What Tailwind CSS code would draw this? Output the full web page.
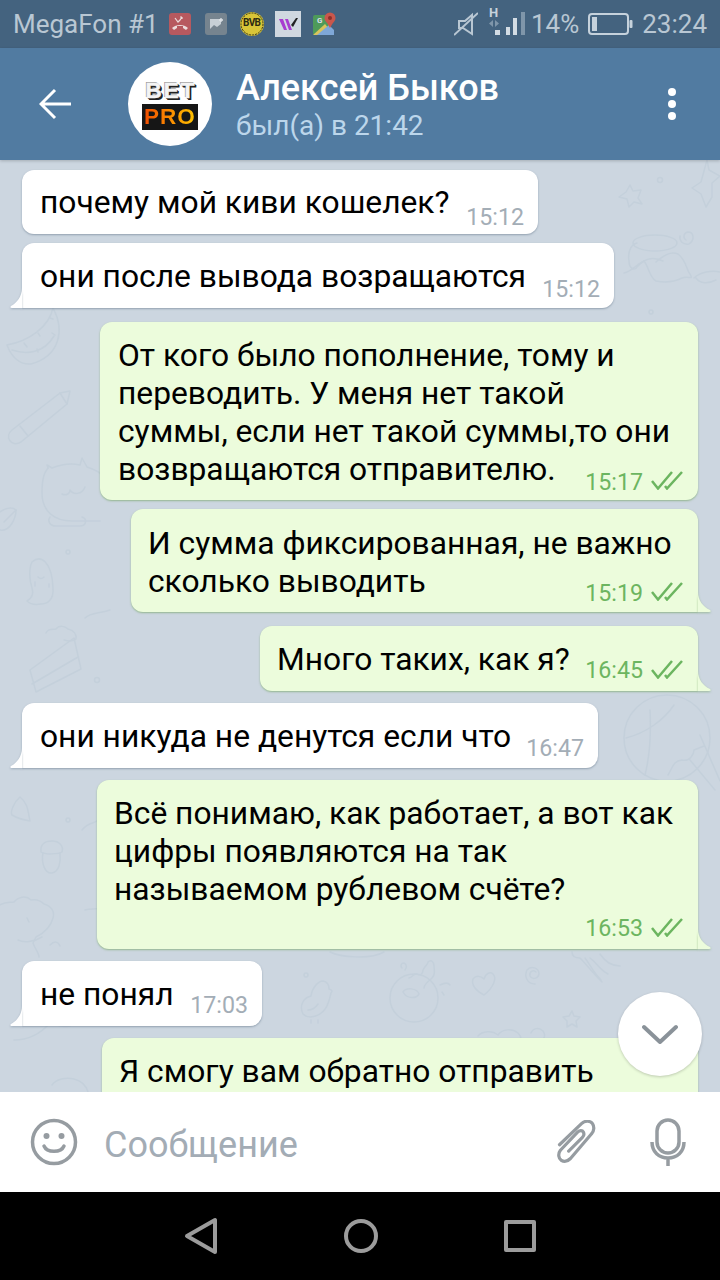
<!DOCTYPE html>
<html lang="ru">
<head>
    <meta charset="UTF-8">
    <meta name="viewport" content="width=device-width, initial-scale=1.0">
    <title>Алексей Быков</title>
    <script src="https://cdn.jsdelivr.net/npm/@tailwindcss/browser@4"></script>
</head>
<body class="bg-black">
<div class="w-[720px] h-[1280px] flex flex-col overflow-hidden font-['Roboto',sans-serif] text-black">

    <!-- status bar -->
    <div class="h-12 shrink-0 bg-[#44637f] flex items-center text-[#b9c7d3] text-[26px] pl-[13px] pr-[13px]">
        <span class="w-[156px]">MegaFon #1</span>
        <div class="flex items-center">
            <svg class="w-[22px] h-[22px]" viewBox="0 0 22 22"><rect width="22" height="22" rx="3" fill="#b7595f"/><path d="M3 15c4-4 12-4 16 0l-2 2-3-2v-2H8v2l-3 2z" fill="#ecdcdc"/><path d="M6 5l3 4 2-2 2-3M13 4h-2M13 4v2" stroke="#ecdcdc" stroke-width="1.2" fill="none"/></svg>
            <svg class="w-[22px] h-[22px] ml-[14px]" viewBox="0 0 22 22"><rect width="22" height="22" rx="3" fill="#76848f"/><rect x="5" y="6" width="11" height="10" fill="#c8d0d6"/><path d="M5 16l4-4 3 2 4-3v5z" fill="#76848f"/><path d="M14 7h4M16 5v4" stroke="#dfe4e8" stroke-width="1.3"/></svg>
            <svg class="w-6 h-6 ml-[13px]" viewBox="0 0 24 24"><circle cx="12" cy="12" r="12" fill="#d8c538"/><circle cx="12" cy="12" r="11" fill="none" stroke="#33321a" stroke-width="1" stroke-dasharray="2 1"/><text x="12" y="14" text-anchor="middle" font-size="10" font-weight="700" font-family="Roboto" fill="#2b2a12" textLength="18">BVB</text></svg>
            <div class="w-[26px] h-[26px] ml-[11px] bg-[#d0d8e0] flex items-center justify-center">
                <svg class="w-5 h-4" viewBox="0 0 20 16"><path d="M1 3h4l4 11H6zM7 3h3l4 11h-3z" fill="#a83cd0"/><path d="M13 9l5-7h2l-5 9z" fill="#222"/></svg>
            </div>
            <svg class="w-6 h-6 ml-[11px]" viewBox="0 0 24 24"><path d="M1 5a2 2 0 0 1 2-2h14v20H3a2 2 0 0 1-2-2z" fill="#4e9a5a"/><path d="M1 23l12-11 9 11z" fill="#d9c45c"/><path d="M5 23l12-10 5 5v5z" fill="#7fa8d8"/><circle cx="18" cy="6" r="5.5" fill="#c9574c"/><path d="M14 9l4 7 4-7z" fill="#c9574c"/><circle cx="18" cy="6" r="2" fill="#8d3029"/><text x="5" y="11" font-size="8" font-weight="700" font-family="Roboto" fill="#dde">G</text></svg>
        </div>
        <div class="ml-auto flex items-center">
            <svg class="w-6 h-6" viewBox="0 0 24 24" fill="none" stroke="#b9c7d3" stroke-width="2"><path d="M0 23L24 1"/><path d="M18 3v19L9 16H5V9h6z"/></svg>
            <div class="relative w-[38px] h-[26px] ml-[10px]">
                <span class="absolute left-[1px] top-[-5px] text-[13px] leading-[14px] font-bold text-[#c6d2dc]">H</span>
                <svg class="absolute left-0 top-0 w-[38px] h-[26px]" viewBox="0 0 38 26"><path d="M5 9l-4 3.500 4 3.500zM7 9l4 3.500-4 3.500z" fill="#7f96aa"/><rect x="7" y="19" width="5" height="5" fill="#d3dce4"/><rect x="18" y="16" width="4" height="8" fill="#d3dce4"/><rect x="25" y="7" width="4" height="17" fill="#d3dce4"/><rect x="33" y="1" width="4" height="23" fill="#7f96aa"/></svg>
            </div>
            <span class="ml-[5px]">14%</span>
            <svg class="w-[45px] h-[22px] ml-[9px]" viewBox="0 0 45 22" fill="none"><rect x="1" y="1" width="39" height="20" rx="3" stroke="#c6d2dc" stroke-width="2"/><rect x="4" y="4" width="5" height="14" fill="#c6d2dc"/><rect x="41.5" y="7" width="3" height="8" rx="1" fill="#c6d2dc"/></svg>
            <span class="ml-[9px]">23:24</span>
        </div>
    </div>

    <!-- header -->
    <div class="h-[112px] shrink-0 bg-[#517ba1] flex items-center relative z-10 shadow-[0_1px_3px_rgba(0,0,0,0.2)]">
        <svg class="w-8 h-8 ml-[39px]" viewBox="0 0 32 32" fill="none" stroke="#fff" stroke-width="3"><path d="M32 16H2M16 2L2 16l14 14"/></svg>
        <div class="w-[84px] h-[84px] ml-[57px] rounded-full bg-white flex items-center justify-center font-['Liberation_Sans',sans-serif] font-bold shrink-0">
            <div class="flex flex-col items-center">
                <span class="block h-[26px] text-[22.5px] leading-[26px] tracking-[2px] pl-[2px] text-[#f4f4f4] [-webkit-text-stroke:0.5px_#f4f4f4] [text-shadow:1px_1px_0_#222,2px_2px_0_#222,-1px_-1px_0_#999]">BET</span>
                <div class="bg-[#161616] px-[2px] h-[26px]">
                    <span class="block text-[22.5px] leading-[26px] tracking-[1px] bg-linear-to-r from-[#f04a00] to-[#ffc400] bg-clip-text text-transparent">PRO</span>
                </div>
            </div>
        </div>
        <div class="ml-[24px] pt-[4px] flex flex-col">
            <span class="text-[36px] leading-[40px] font-medium text-white">Алексей Быков</span>
            <span class="text-[28px] leading-[36px] text-[#bcd6eb]">был(а) в 21:42</span>
        </div>
        <div class="ml-auto mr-[44px] flex flex-col gap-[4px]">
            <span class="w-2 h-2 rounded-full bg-white"></span>
            <span class="w-2 h-2 rounded-full bg-white"></span>
            <span class="w-2 h-2 rounded-full bg-white"></span>
        </div>
    </div>

    <!-- chat -->
    <div class="flex-1 relative overflow-hidden bg-[#ccd6e0] pt-[10px] text-[31.75px] leading-[38px]">
        <!-- wallpaper doodles, coordinates are screen pixels -->
        <svg class="absolute inset-0 w-[720px] h-[932px]" viewBox="0 160 720 932" fill="none" stroke="#c4d0db" stroke-width="1.5" stroke-linecap="round" stroke-linejoin="round">
            <!-- watermelon -->
            <path d="M7 345c22-4 42-18 46-37 12 22 7 48-22 56-12 1-20-8-24-19z"/><path d="M12 350c15 5 32 3 42-14"/>
            <path d="M24 343l3 4M37 349l1 3M38 333l2 3M52 333l3 2M50 318l3 1"/>
            <!-- pencil -->
            <path d="M12 430L60 393l10-2-3 13-46 38c-10 6-17-6-9-12z"/><path d="M60 393l7 11M20 426l8 10"/>
            <!-- cat -->
            <path d="M48 468c-2 3-6 6-6 25 0 18 12 28 30 28h28"/><path d="M48 468l-1-3 5 3c10-4 20-5 28-3l2-7 5 9c6 2 12 4 16 9"/>
            <path d="M62 494c4 2 8 0 8-4M70 490c3 5 12 5 15-3"/><path d="M50 517c-3 4 0 9 6 9h24c6 0 8-7 2-9"/>
            <!-- leaf -->
            <path d="M0 512c8-6 14-4 16-2 0 8-6 22-16 20"/><path d="M4 522l12-12"/>
            <circle cx="68" cy="552" r="2"/>
            <!-- ghost -->
            <path d="M32 562c9-8 20 0 21 26 1 12-6 16-12 16-6 1-11 0-14-3 5-3 7-7 5-13-3-9-3-20 0-26z"/><path d="M35 582v4M49 584v3M38 577c2 2 4 2 6 0"/>
            <!-- cake -->
            <path d="M30 670l44-32 7 31-45 23z"/><path d="M32 684l46-27"/><path d="M46 633c2-5 8-3 10-4 3-4 9-3 12 0 6 1 9 6 8 10-3 3-8 2-12 1"/>
            <path d="M85 618c6-6 14-4 25-8"/>
            <circle cx="97" cy="680" r="2.5"/>
            <!-- leaf, acorn -->
            <path d="M20 797c-6 5-10 15-8 18 5 3 12 5 18 6-2-9-2-18-10-24z"/><circle cx="68" cy="820" r="2"/>
            <path d="M41 852c-1-8 4-11 11-11s12 5 10 11c-3 2-17 3-21 0z"/><path d="M43 853c-2 10 2 21 9 20s9-11 8-20"/>
            <!-- dino -->
            <path d="M0 905c6-4 10-2 14-3 4-5 12-7 17-2 5-1 10 1 13 4 7 2 11 7 9 14-2 8-7 14-17 19l-3 6c2 6 6 10 6 14"/>
            <path d="M18 940c6 3 16 2 24-3"/><path d="M27 918l2 4"/><path d="M14 1040c16 0 28-8 36-17 8 2 20 7 23 0"/><path d="M50 945c4-4 8-4 10 1"/>
            <path d="M52 1085c4-6 14-8 22-6 8 2 12 6 14 13"/>
            <path d="M82 830c6-8 12-6 16-10M85 910c6-2 10 0 15-2"/>
            <!-- star, starfish -->
            <path d="M630 185l3 6 8-1-3 8 4 6-8-2-5 5-2-8-8-2 7-5z"/><circle cx="660" cy="180" r="2.5"/>
            <path d="M707 160l2 10 11 6-8 7 0 14-6 10-5-13-9-6 9-6z"/>
            <!-- jar, seal -->
            <path d="M637 243c-8 2-9 12-8 18 0 8 6 10 8 6 5-6 14-12 26-6"/><ellipse cx="655" cy="243" rx="22" ry="8"/>
            <path d="M624 273c8-2 12-8 20-12 5 6 5 16 12 20 10 2 20 0 26-3 6-3 12 3 8-4-3-3-4-14-12-20-8-3-15 2-22 8"/>
            <path d="M686 240c-3-2-3-7 2-8 6 0 7 8 1 12-6 1-10-3-9-8"/><path d="M694 278c6-6 18-8 26-6M696 278c4 6 12 6 20 2"/>
            <circle cx="651" cy="312" r="2"/>
            <!-- globe -->
            <circle cx="667" cy="738" r="43"/><path d="M626 738c20-5 38-18 48-33M645 775c5-20 6-45 5-65"/><path d="M668 775c5-8 5-14 14-15 8 2 12-6 12-10l10-4M700 735l20 46M690 760l25 30"/>
            <!-- bottom row -->
            <path d="M303 1014c-4-8 0-16 8-18 1-8 7-15 12-15 6 1 6 6 6 8 3 1 4 2 2 4-2 8-4 22-20 24-4 0-6-1-8-3z"/><path d="M308 1010c4 0 8-3 10-6M311 1020v3M318 1020v3"/><circle cx="306" cy="975" r="2"/>
            <circle cx="414" cy="998" r="24"/><path d="M409 978c3 0 6-6 8-4 3 2 6 0 6-4 2-4 5-6 5-8 3-3 6 0 6 4 0 4 2 8-2 12-3 3-8 6-8 10"/><path d="M403 992c3-5 14-4 16 2-3 5-12 5-16-2z"/><path d="M402 968c-2-2-1-5 2-5 3 1 3 5 1 7"/><path d="M440 985c4-2 8-3 10 0M442 992l2 3"/>
            <path d="M484 995c-8-4-13-10-11-16 3-4 8-3 11 0 1-5 6-8 9-5 4 4 1 13-9 21z"/>
            <path d="M536 972c-3-3-7 0-6 4 2 4 8 3 9-2 0-6-8-9-12-4-3 6 0 14 8 14"/>
            <path d="M572 952c0 4 2 6 8 6 6 6 12 14 22 24M585 958c6 8 8 14 16 22M590 958c8 6 10 12 18 16M600 954c4 6 10 12 20 12"/>
            <path d="M572 1011l2 5 6 1-4 4 1 6-5-3-5 3 0-6-4-4 6-1z"/>
            <path d="M478 1036c4-5 14-6 20-1 4-6 14-7 20-2 2 2 3 4 3 6M531 1033c2-5 8-6 12-2 2 3 2 6 0 8"/>
            <path d="M330 952c10 5 40 8 54 0"/>
        </svg>
        <div class="relative flex flex-col">

            <div class="relative self-start ml-[22px] w-[516px] h-[64px] bg-white rounded-[12px] shadow-[0_1px_2px_rgba(90,110,130,0.5)] pl-[18px] pt-[14px]">почему мой киви кошелек?
                <span class="absolute right-[14px] bottom-[3px] text-[23.2px] leading-[28px] text-[#a3adb6]">15:12</span>
            </div>

            <div class="relative self-start mt-[9px] ml-[22px] w-[592px] h-[65px] bg-white rounded-[12px] rounded-bl-none shadow-[0_1px_2px_rgba(90,110,130,0.5)] pl-[18px] pt-[15px]">они после вывода возращаются
                <svg class="absolute left-[-12px] bottom-0 w-[12px] h-[20px] drop-shadow-[0_1px_1px_rgba(90,110,130,0.4)]" viewBox="0 0 12 20"><path d="M12 0C12 8 7 15 1 18c-1 1-1 2 1 2h10z" fill="#fff"/></svg>
                <span class="absolute right-[14px] bottom-[5px] text-[23.2px] leading-[28px] text-[#a3adb6]">15:12</span>
            </div>

            <div class="relative self-end mt-[14px] mr-[22px] w-[598px] h-[178px] bg-[#ecfcdc] rounded-[12px] shadow-[0_1px_2px_rgba(110,160,90,0.6)] pl-[18px] pt-[15px] whitespace-nowrap">От кого было пополнение, тому и<br>переводить. У меня нет такой<br>суммы, если нет такой суммы,то они<br>возвращаются отправителю.
                <span class="absolute right-[55px] bottom-[4px] text-[23.2px] leading-[28px] text-[#6cb560]">15:17</span>
                <svg class="absolute right-[15px] bottom-[10px] w-[32px] h-[19px]" viewBox="0 0 32 19" fill="none" stroke="#6cb560" stroke-width="2.5"><path d="M1 10l6 7.500L21 1"/><path d="M14 15l2 2.500L31 1"/></svg>
            </div>

            <div class="relative self-end mt-[9px] mr-[22px] w-[567px] h-[103px] bg-[#ecfcdc] rounded-[12px] rounded-br-none shadow-[0_1px_2px_rgba(110,160,90,0.6)] pl-[17px] pt-[16px] whitespace-nowrap">И сумма фиксированная, не важно<br>сколько выводить
                <span class="absolute right-[55px] bottom-[5px] text-[23.2px] leading-[28px] text-[#6cb560]">15:19</span>
                <svg class="absolute right-[15px] bottom-[11px] w-[32px] h-[19px]" viewBox="0 0 32 19" fill="none" stroke="#6cb560" stroke-width="2.5"><path d="M1 10l6 7.500L21 1"/><path d="M14 15l2 2.500L31 1"/></svg>
                <svg class="absolute right-[-13px] bottom-0 w-[13px] h-[20px] drop-shadow-[0_1px_1px_rgba(110,160,90,0.5)]" viewBox="0 0 13 20"><path d="M0 0c0 8 5 15 12 18 1 1 1 2-1 2H0z" fill="#ecfcdc"/></svg>
            </div>

            <div class="relative self-end mt-[14px] mr-[22px] w-[438px] h-[65px] bg-[#ecfcdc] rounded-[12px] rounded-br-none shadow-[0_1px_2px_rgba(110,160,90,0.6)] pl-[17px] pt-[15px]">Много таких, как я?
                <span class="absolute right-[55px] bottom-[7px] text-[23.2px] leading-[28px] text-[#6cb560]">16:45</span>
                <svg class="absolute right-[15px] bottom-[12px] w-[32px] h-[19px]" viewBox="0 0 32 19" fill="none" stroke="#6cb560" stroke-width="2.5"><path d="M1 10l6 7.500L21 1"/><path d="M14 15l2 2.500L31 1"/></svg>
                <svg class="absolute right-[-13px] bottom-0 w-[13px] h-[20px] drop-shadow-[0_1px_1px_rgba(110,160,90,0.5)]" viewBox="0 0 13 20"><path d="M0 0c0 8 5 15 12 18 1 1 1 2-1 2H0z" fill="#ecfcdc"/></svg>
            </div>

            <div class="relative self-start mt-[12px] ml-[22px] w-[576px] h-[65px] bg-white rounded-[12px] rounded-bl-none shadow-[0_1px_2px_rgba(90,110,130,0.5)] pl-[18px] pt-[15px]">они никуда не денутся если что
                <svg class="absolute left-[-12px] bottom-0 w-[12px] h-[20px] drop-shadow-[0_1px_1px_rgba(90,110,130,0.4)]" viewBox="0 0 12 20"><path d="M12 0C12 8 7 15 1 18c-1 1-1 2 1 2h10z" fill="#fff"/></svg>
                <span class="absolute right-[14px] bottom-[6px] text-[23.2px] leading-[28px] text-[#a3adb6]">16:47</span>
            </div>

            <div class="relative self-end mt-[12px] mr-[22px] w-[601px] h-[169px] bg-[#ecfcdc] rounded-[12px] rounded-br-none shadow-[0_1px_2px_rgba(110,160,90,0.6)] pl-[17px] pt-[15px] whitespace-nowrap">Всё понимаю, как работает, а вот как<br>цифры появляются на так<br>называемом рублевом счёте?
                <span class="absolute right-[55px] bottom-[7px] text-[23.2px] leading-[28px] text-[#6cb560]">16:53</span>
                <svg class="absolute right-[15px] bottom-[12px] w-[32px] h-[19px]" viewBox="0 0 32 19" fill="none" stroke="#6cb560" stroke-width="2.5"><path d="M1 10l6 7.500L21 1"/><path d="M14 15l2 2.500L31 1"/></svg>
                <svg class="absolute right-[-13px] bottom-0 w-[13px] h-[20px] drop-shadow-[0_1px_1px_rgba(110,160,90,0.5)]" viewBox="0 0 13 20"><path d="M0 0c0 8 5 15 12 18 1 1 1 2-1 2H0z" fill="#ecfcdc"/></svg>
            </div>

            <div class="relative self-start mt-[12px] ml-[22px] w-[240px] h-[65px] bg-white rounded-[12px] rounded-bl-none shadow-[0_1px_2px_rgba(90,110,130,0.5)] pl-[18px] pt-[15px]">не понял
                <svg class="absolute left-[-12px] bottom-0 w-[12px] h-[20px] drop-shadow-[0_1px_1px_rgba(90,110,130,0.4)]" viewBox="0 0 12 20"><path d="M12 0C12 8 7 15 1 18c-1 1-1 2 1 2h10z" fill="#fff"/></svg>
                <span class="absolute right-[14px] bottom-[7px] text-[23.2px] leading-[28px] text-[#a3adb6]">17:03</span>
            </div>

            <div class="relative self-end mt-[12px] mr-[22px] w-[596px] h-[120px] bg-[#ecfcdc] rounded-[12px] shadow-[0_1px_2px_rgba(110,160,90,0.6)] pl-[17px] pt-[15px] whitespace-nowrap">Я смогу вам обратно отправить</div>
        </div>

        <!-- scroll down button -->
        <div class="absolute left-[618px] top-[832px] w-[84px] h-[84px] rounded-full bg-white shadow-[0_1px_3px_rgba(0,0,0,0.2)] flex items-center justify-center">
            <svg class="w-9 h-5" viewBox="0 0 36 20" fill="none" stroke="#8a9299" stroke-width="4" stroke-linecap="round" stroke-linejoin="round"><path d="M2 3l16 15L34 3"/></svg>
        </div>
    </div>

    <!-- input bar -->
    <div class="h-[100px] shrink-0 bg-white flex items-center relative">
        <svg class="w-12 h-12 ml-[30px]" viewBox="0 0 48 48" fill="none" stroke="#969ca1" stroke-width="3.5"><circle cx="24" cy="24" r="21.5"/><path d="M14 28c3 7 17 7 20 0" stroke-linecap="round"/><circle cx="16.5" cy="18" r="3" fill="#969ca1" stroke="none"/><circle cx="31.5" cy="18" r="3" fill="#969ca1" stroke="none"/></svg>
        <span class="ml-[26px] mt-[6px] text-[36px] leading-[44px] text-[#a3acb5]">Сообщение</span>
        <svg class="w-[40px] h-[44px] ml-auto" viewBox="0 0 42 48" fill="none" stroke="#969ca1" stroke-width="3.5" stroke-linecap="round" stroke-linejoin="round"><path d="M3 27L27 4c4-4 10-3 12 0s2 8-1 11L15 42c-3 3-7 4-10 2s-4-7-1-11L23 13c2-2 5-2 6 0s1 4-1 6L13 34"/></svg>
        <svg class="w-[36px] h-[48px] ml-[54px] mr-[34px]" viewBox="0 0 36 48" fill="none" stroke="#969ca1" stroke-width="3.5"><rect x="7" y="2" width="22" height="33" rx="11"/><path d="M2 24c0 10 7 16 16 16s16-6 16-16M18 40v8"/></svg>
    </div>

    <!-- nav bar -->
    <div class="h-[88px] shrink-0 bg-black flex items-center justify-center gap-[126px]">
        <svg class="w-[34px] h-[38px]" viewBox="0 0 34 38" fill="none" stroke="#9c9c9c" stroke-width="4" stroke-linejoin="round"><path d="M31 3v32L3 19z"/></svg>
        <svg class="w-[34px] h-[34px]" viewBox="0 0 34 34" fill="none" stroke="#9c9c9c" stroke-width="4"><circle cx="17" cy="17" r="15"/></svg>
        <svg class="w-[32px] h-[32px]" viewBox="0 0 32 32" fill="none" stroke="#9c9c9c" stroke-width="4" stroke-linejoin="round"><rect x="2" y="2" width="28" height="28"/></svg>
    </div>
</div>
</body>
</html>
